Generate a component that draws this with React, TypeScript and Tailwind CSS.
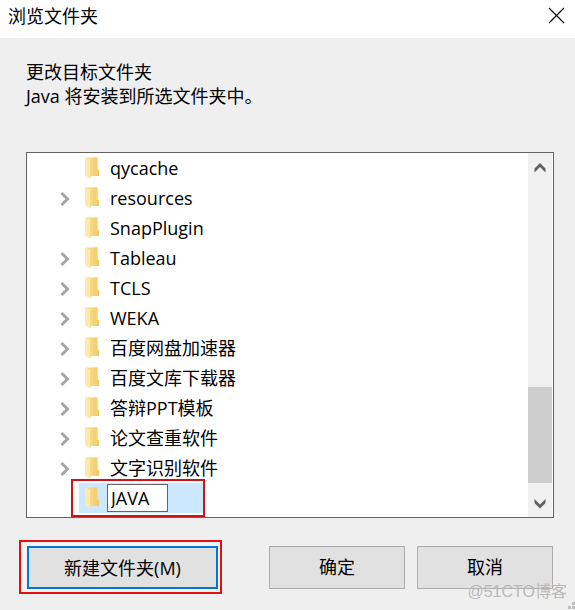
import { useState } from "react";

type Folder = {
  name: string;
  expandable: boolean;
};

const FOLDERS: Folder[] = [
  { name: "qycache", expandable: false },
  { name: "resources", expandable: true },
  { name: "SnapPlugin", expandable: false },
  { name: "Tableau", expandable: true },
  { name: "TCLS", expandable: true },
  { name: "WEKA", expandable: true },
  { name: "百度网盘加速器", expandable: true },
  { name: "百度文库下载器", expandable: true },
  { name: "答辩PPT模板", expandable: true },
  { name: "论文查重软件", expandable: true },
  { name: "文字识别软件", expandable: true },
];

function FolderIcon() {
  return (
    <svg width="14" height="22" viewBox="0 0 14 22" className="shrink-0" aria-hidden="true">
      <path d="M1 0.5h11.5v12l1.5 1v5.5H2z" fill="#f7d880" />
      <path d="M8 0.5h4.5v12l1.5 1v5.5H8z" fill="#f4d174" />
      <path d="M12 13.5h2v5.5h-2z" fill="#efc862" />
      <path d="M0 0.5l5 1.8v19.2L0 18.5z" fill="#ffe9a8" />
      <path d="M5 2.3l1 0.6v16.6l-1 2z" fill="#f9dc8a" />
    </svg>
  );
}

function ExpandIcon() {
  return (
    <svg width="10" height="16" viewBox="0 0 10 16" fill="none" aria-hidden="true">
      <path d="M1.5 3L7.5 9l-6 6" stroke="#a6a6a6" strokeWidth="3" />
    </svg>
  );
}

function ScrollArrow({ down = false }: { down?: boolean }) {
  return (
    <svg width="12" height="10" viewBox="0 0 12 10" aria-hidden="true">
      <path
        d={down ? "M0.5 0l5.5 5.5L11.5 0v4L6 9.5 0.5 4z" : "M0.5 9.5L6 4l5.5 5.5v-4L6 0 0.5 5.5z"}
        fill="#606060"
      />
    </svg>
  );
}

function FolderRow({ folder }: { folder: Folder }) {
  return (
    <li className="flex h-[30px] items-center pl-[33px]">
      <span className="flex w-[25px] shrink-0">
        {folder.expandable && (
          <button type="button" aria-label={`展开 ${folder.name}`}>
            <ExpandIcon />
          </button>
        )}
      </span>
      <FolderIcon />
      <span className="ml-[11px] whitespace-nowrap">{folder.name}</span>
    </li>
  );
}

export default function App() {
  const [name, setName] = useState("JAVA");

  return (
    <div className="relative flex min-h-screen flex-col overflow-hidden bg-[#efefef] font-['Open_Sans','Noto_Sans_CJK_SC',sans-serif] text-[18px] leading-6 text-black">
      <header className="flex h-[38px] items-center justify-between bg-white pr-[10px] pb-[7px] pl-2">
        <h1>浏览文件夹</h1>
        <button type="button" aria-label="关闭">
          <svg width="17" height="17" viewBox="0 0 17 17" aria-hidden="true">
            <path d="M1 1l15 15M16 1L1 16" stroke="#000" strokeWidth="1.2" />
          </svg>
        </button>
      </header>

      <main className="flex flex-col pt-[22px] pr-[21px] pl-[26px]">
        <p>更改目标文件夹</p>
        <p>Java 将安装到所选文件夹中。</p>

        <section className="mt-11 flex border border-[#646464] bg-white">
          <ul className="min-w-0 flex-1 pb-1">
            {FOLDERS.map((folder) => (
              <FolderRow key={folder.name} folder={folder} />
            ))}
            <li className="relative ml-[52px] flex h-[30px] w-[124px] items-center bg-[#cce8ff] pl-[6px]">
              <FolderIcon />
              <input
                type="text"
                aria-label="文件夹名称"
                value={name}
                onChange={(event) => setName(event.target.value)}
                className="ml-2 h-7 w-[61px] border border-[#646464] bg-white px-[3px] outline-none"
              />
              <span className="pointer-events-none absolute -inset-y-1 -right-[2px] -left-2 border-2 border-[#d0121b]" />
            </li>
          </ul>
          <div className="mr-px flex w-6 shrink-0 flex-col bg-[#f0f0f0]">
            <button type="button" aria-label="向上滚动" className="flex h-[30px] items-center justify-center">
              <ScrollArrow />
            </button>
            <div className="flex flex-1 flex-col justify-end pb-2">
              <div className="h-24 bg-[#cdcdcd]" />
            </div>
            <button type="button" aria-label="向下滚动" className="flex h-[26px] items-center justify-center">
              <ScrollArrow down />
            </button>
          </div>
        </section>

        <footer className="mt-[22px] flex items-center justify-between pr-px">
          <div className="-ml-[7px] border-2 border-[#e60f0f] bg-[#f5f3f3] pt-1 pr-[2px] pb-[3px] pl-[6px]">
            <button
              type="button"
              className="block h-[43px] w-[191px] border-2 border-[#0078d7] bg-[#e1e1e1]"
            >
              新建文件夹(M)
            </button>
          </div>
          <div className="flex gap-3">
            <button type="button" className="h-[43px] w-[136px] border border-[#adadad] bg-[#e1e1e1]">
              确定
            </button>
            <button type="button" className="h-[43px] w-[136px] border border-[#adadad] bg-[#e1e1e1]">
              取消
            </button>
          </div>
        </footer>
      </main>

      <span className="pointer-events-none absolute right-2 bottom-[6px] font-['Liberation_Sans','Noto_Sans_CJK_SC',sans-serif] text-[16px] leading-6 text-[#b9b9b9]">
        @51CTO博客
      </span>
      <svg className="absolute right-0 bottom-0" width="8" height="8" viewBox="0 0 8 8" aria-hidden="true">
        <path d="M5 0h3v3H5zM1 4h3v3H1zM5 4h3v3H5z" fill="#bfbfbf" />
      </svg>
    </div>
  );
}
